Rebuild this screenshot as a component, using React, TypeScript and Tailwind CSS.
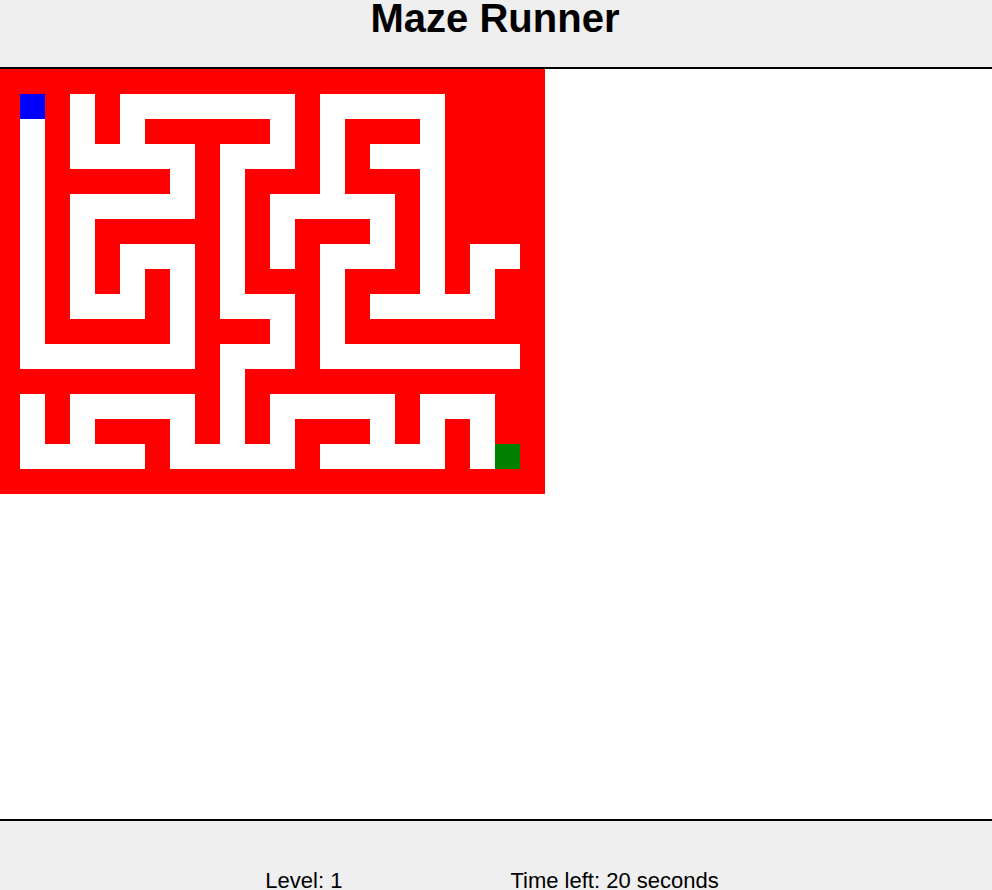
import React from 'react';

// # wall, . path, S player, E goal
const MAZE: string[] = [
  '######################',
  '#S#.#.......#.....####',
  '#.#.#.#####.#.###.####',
  '#.#.....#...#.#...####',
  '#.#####.#.###.###.####',
  '#.#.....#.#.....#.####',
  '#.#.#####.#.###.#.####',
  '#.#.#...#.#.#...#.#..#',
  '#.#.#.#.#.###.###.#.##',
  '#.#...#.#...#.#.....##',
  '#.#####.###.#.########',
  '#.......#...#........#',
  '#########.############',
  '#.#.....#.#.....#...##',
  '#.#.###.#.#.###.#.#.##',
  '#.....#.....#.....#.E#',
  '######################',
];

const cellClass = (c: string) => {
  if (c === '#') return 'bg-[#ff0000]';
  if (c === 'S') return 'bg-[#0000ff]';
  if (c === 'E') return 'bg-[#008000]';
  return 'bg-white';
};

const App: React.FC = () => {
  return (
    <div className="min-h-screen bg-white font-['Liberation_Sans',Arial,sans-serif] text-black">
      <header className="h-[69px] bg-[#efefef] border-b-2 border-black pr-[2px]">
        <h1 className="text-center text-[40px] font-bold leading-[36px]">Maze Runner</h1>
      </header>

      <main className="h-[750px] bg-white">
        <div className="grid w-[545px] grid-cols-[20px_repeat(21,25px)] grid-rows-[repeat(17,25px)]">
          {MAZE.map((row, r) =>
            row.split('').map((c, i) => <div key={`${r}-${i}`} className={cellClass(c)} />)
          )}
        </div>
      </main>

      <footer className="h-[100px] bg-[#efefef] border-t-2 border-black pt-[47px]">
        <div className="flex justify-center gap-[168px] pr-[8px] text-[22px] leading-[25px]">
          <span>Level: 1</span>
          <span>Time left: 20 seconds</span>
        </div>
      </footer>
    </div>
  );
};

export default App;
